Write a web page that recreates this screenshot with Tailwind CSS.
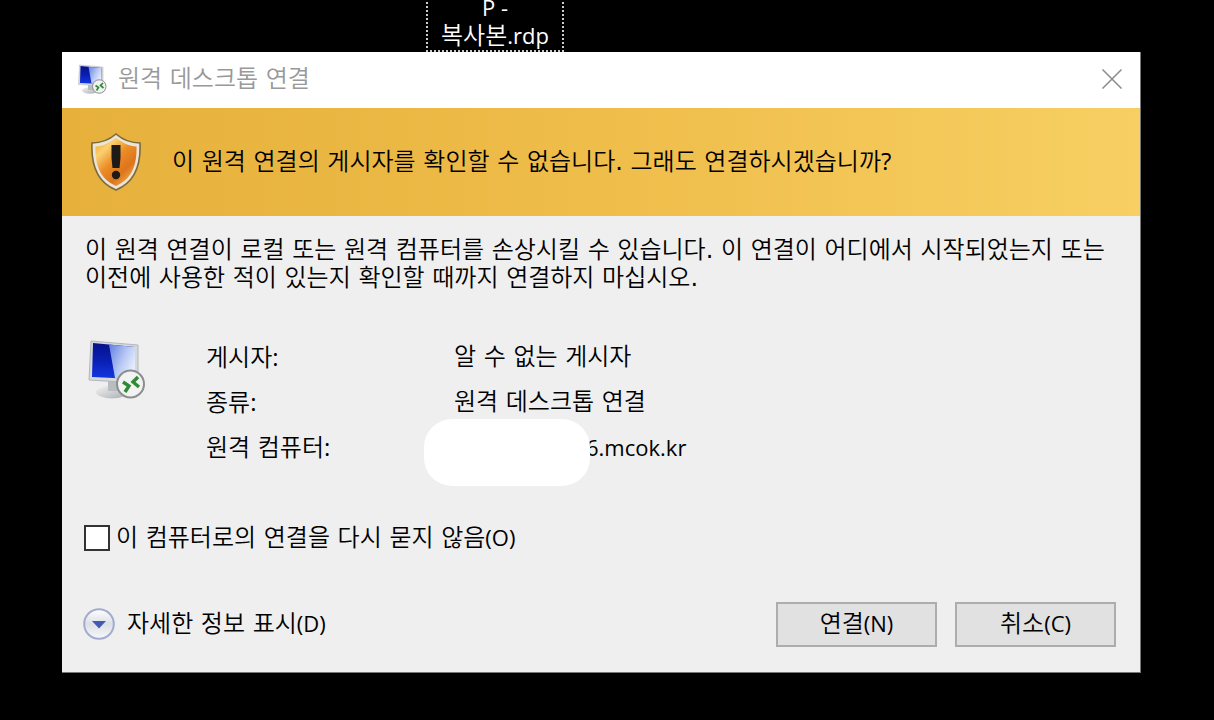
<!DOCTYPE html>
<html lang="ko">
<head>
<meta charset="utf-8">
<title>원격 데스크톱 연결</title>
<script src="https://cdn.jsdelivr.net/npm/@tailwindcss/browser@4"></script>
</head>
<body class="min-h-screen overflow-hidden bg-black font-['DejaVu_Sans','Noto_Sans_CJK_KR',sans-serif] text-[24px] leading-7 font-[350] text-black">

<svg class="absolute size-0" aria-hidden="true">
  <defs>
    <linearGradient id="screen" x1="0" y1="0" x2="0" y2="1">
      <stop offset="0" stop-color="#06128a"/><stop offset="0.5" stop-color="#0a1fb4"/><stop offset="1" stop-color="#1238e0"/>
    </linearGradient>
    <linearGradient id="glare" x1="0" y1="0" x2="1" y2="0.6">
      <stop offset="0" stop-color="#5f7fe0"/><stop offset="0.6" stop-color="#b9c9f4"/><stop offset="1" stop-color="#e6edfc"/>
    </linearGradient>
    <linearGradient id="stand" x1="0" y1="0" x2="1" y2="1">
      <stop offset="0" stop-color="#f4f4f4"/><stop offset="1" stop-color="#a9adb0"/>
    </linearGradient>
    <symbol id="rdp" viewBox="0 0 60 60">
      <ellipse cx="24" cy="53" rx="16" ry="6.500" fill="url(#stand)"/>
      <path d="M20 42h14v10H20z" fill="#b9bcc0"/>
      <path d="M3 2 L50 6 V44 L1 41z" fill="#d5d8dc" stroke="#b4b7bb"/>
      <path d="M5 4 L47 8 V40 L4 38z" fill="url(#screen)"/>
      <path d="M21 5.500 L47 8 V40 L27 39z" fill="url(#glare)"/>
      <circle cx="42.500" cy="45" r="13.500" fill="#f1f2f1" stroke="#8b8e8f" stroke-width="2"/>
      <path d="M35 43 l6 4 l-4 6 M50 38 l-5 5 l6 5" fill="none" stroke="#2f8a35" stroke-width="3.4"/>
    </symbol>
  </defs>
</svg>

<div class="flex h-[52px] items-end pl-[426px]">
  <div class="w-[138px] shrink-0 border-2 border-t-0 border-dotted border-white/80 text-center text-white">
    <div class="font-['Open_Sans',sans-serif] text-[22px] font-normal">P -</div>
    <div>복사본<span class="font-['Open_Sans',sans-serif] text-[22px] font-normal">.rdp</span></div>
  </div>
</div>

<main class="mr-[73px] ml-[62px] border-r border-b border-[#777] bg-[#efefef]">
  <header class="flex h-14 items-center bg-white px-4 pb-[2px]">
    <svg class="size-[30px]" aria-hidden="true"><use href="#rdp"/></svg>
    <h1 class="ml-[10px] grow font-[350] text-[#999]">원격 데스크톱 연결</h1>
    <button class="flex size-6 items-center justify-center" aria-label="닫기">
      <svg class="size-5" viewBox="0 0 20 20" fill="none" stroke="#8a8a8a" stroke-width="1.5"><path d="M.5.5l19 19M19.5.5l-19 19"/></svg>
    </button>
  </header>

  <section class="flex h-[108px] items-center bg-linear-to-r from-[#e6b03b] via-[#efbd4a] to-[#f7cf62] pl-7">
    <svg class="h-[60px] w-[52px]" viewBox="0 0 52 60" aria-hidden="true">
      <defs>
        <linearGradient id="amber" x1="0" y1="0" x2="0.8" y2="1">
          <stop offset="0" stop-color="#f0a21c"/><stop offset="0.25" stop-color="#fbd071"/><stop offset="0.5" stop-color="#ec8d27"/><stop offset="0.75" stop-color="#dc741c"/><stop offset="1" stop-color="#f4b04a"/>
        </linearGradient>
      </defs>
      <path d="M26 2 C33 8 41 11 50 11 C51 32 46 50 26 58 C6 50 1 32 2 11 C11 11 19 8 26 2z" fill="#e9e5da" stroke="#7d6a3c" stroke-width="1.6"/>
      <path d="M26 6 C33 11 39 14 46.500 14.500 C47 33 42 47 26 54 C10 47 5 33 5.500 14.500 C13 14 19 11 26 6z" fill="url(#amber)"/>
      <path d="M21.500 13h9v13l-1 10h-7l-1-10z" fill="#1d1a18"/>
      <circle cx="26" cy="43" r="4.200" fill="#1d1a18"/>
    </svg>
    <h2 class="ml-[30px] pb-[2px] font-[350]">이 원격 연결의 게시자를 확인할 수 없습니다<span class="font-normal">.</span> 그래도 연결하시겠습니까<span class="font-['Open_Sans',sans-serif] font-normal">?</span></h2>
  </section>

  <section class="pt-5 pr-6 pb-[25px] pl-[23px]">
    <p class="whitespace-nowrap">이 원격 연결이 로컬 또는 원격 컴퓨터를 손상시킬 수 있습니다<span class="font-normal">.</span> 이 연결이 어디에서 시작되었는지 또는<br>이전에 사용한 적이 있는지 확인할 때까지 연결하지 마십시오<span class="font-normal">.</span></p>

    <div class="mt-[51px] flex">
      <svg class="-mt-1 ml-[3px] size-[60px] shrink-0" aria-hidden="true"><use href="#rdp"/></svg>
      <dl class="ml-[58px] grid grid-cols-[248px_1fr] gap-y-4">
        <dt>게시자<span class="font-['Open_Sans',sans-serif] font-normal">:</span></dt><dd>알 수 없는 게시자</dd>
        <dt>종류<span class="font-['Open_Sans',sans-serif] font-normal">:</span></dt><dd>원격 데스크톱 연결</dd>
        <dt>원격 컴퓨터<span class="font-['Open_Sans',sans-serif] font-normal">:</span></dt>
        <dd class="relative pl-[132px] font-['Open_Sans',sans-serif] text-[22px] font-normal">6.mcok.kr<span class="absolute -top-[14px] -left-[30px] h-[67px] w-[166px] rounded-[28px] bg-white"></span></dd>
      </dl>
    </div>

    <label class="mt-[61px] -ml-px flex items-center">
      <input type="checkbox" class="size-[26px] appearance-none border-2 border-[#333] bg-white">
      <span class="ml-[6px]">이 컴퓨터로의 연결을 다시 묻지 않음<span class="font-['Open_Sans',sans-serif] text-[22px] font-normal">(O)</span></span>
    </label>

    <div class="mt-[50px] flex items-center gap-[18px]">
      <button class="mr-auto -ml-[2px] flex items-center pb-[2px]">
        <svg class="size-8" viewBox="0 0 32 32" aria-hidden="true">
          <defs><linearGradient id="knob" x1="0" y1="0" x2="0" y2="1"><stop offset="0" stop-color="#fff"/><stop offset="0.5" stop-color="#dcdfe5"/><stop offset="1" stop-color="#f8f9fb"/></linearGradient></defs>
          <circle cx="16" cy="16" r="14.800" fill="url(#knob)" stroke="#a3abcf" stroke-width="2"/>
          <path d="M9 13h14l-7 7.500z" fill="#3f5cb5"/>
        </svg>
        <span class="ml-3">자세한 정보 표시<span class="font-['Open_Sans',sans-serif] text-[22px] font-normal">(D)</span></span>
      </button>
      <button class="h-[45px] w-[161px] border-2 border-[#adadad] bg-[#e1e1e1] pb-[2px]">연결<span class="font-['Open_Sans',sans-serif] text-[22px] font-normal">(N)</span></button>
      <button class="h-[45px] w-[161px] border-2 border-[#adadad] bg-[#e1e1e1] pb-[2px]">취소<span class="font-['Open_Sans',sans-serif] text-[22px] font-normal">(C)</span></button>
    </div>
  </section>
</main>
</body>
</html>
